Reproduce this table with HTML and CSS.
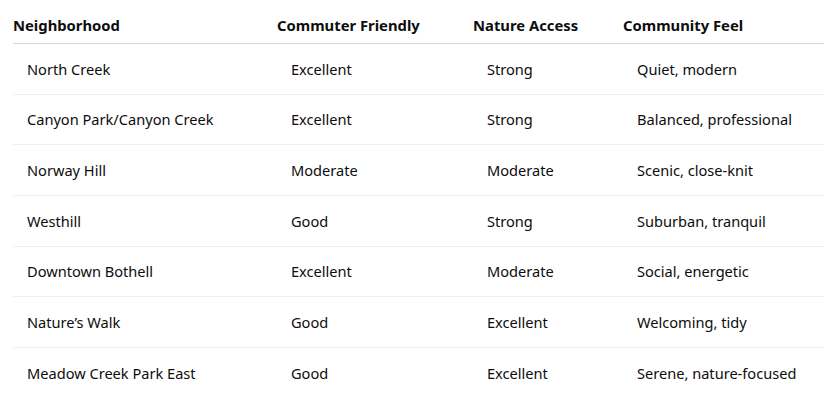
FILE: index.html
```html
<!DOCTYPE html>
<html lang="en">
<head>
<meta charset="utf-8">
<link rel="stylesheet" href="styles.css">
</head>
<body>
<div class="wrap">
<table class="grid">
  <colgroup>
    <col class="c1"><col class="c2"><col class="c3"><col class="c4">
  </colgroup>
  <thead>
    <tr><th>Neighborhood</th><th>Commuter Friendly</th><th>Nature Access</th><th>Community Feel</th></tr>
  </thead>
  <tbody>
    <tr><td>North Creek</td><td>Excellent</td><td>Strong</td><td>Quiet, modern</td></tr>
    <tr><td>Canyon Park/Canyon Creek</td><td>Excellent</td><td>Strong</td><td>Balanced, professional</td></tr>
    <tr><td>Norway Hill</td><td>Moderate</td><td>Moderate</td><td>Scenic, close-knit</td></tr>
    <tr><td>Westhill</td><td>Good</td><td>Strong</td><td>Suburban, tranquil</td></tr>
    <tr><td>Downtown Bothell</td><td>Excellent</td><td>Moderate</td><td>Social, energetic</td></tr>
    <tr><td>Nature’s Walk</td><td>Good</td><td>Excellent</td><td>Welcoming, tidy</td></tr>
    <tr><td>Meadow Creek Park East</td><td>Good</td><td>Excellent</td><td>Serene, nature-focused</td></tr>
  </tbody>
</table>
</div>
</body>
</html>
```

FILE: styles.css
```css
html, body {
  margin: 0;
  padding: 0;
  background: #ffffff;
}
body {
  font-family: "Noto Sans", "Open Sans", sans-serif;
  font-size: 15px;
  color: #0d0d0d;
}
.wrap {
  padding: 0 4px 0 13px;
}
.grid {
  width: 811px;
  border-collapse: collapse;
  table-layout: fixed;
}
.c1 { width: 264px; }
.c2 { width: 196px; }
.c3 { width: 150px; }
.c4 { width: 201px; }
.grid th {
  text-align: left;
  font-weight: 700;
  font-size: 14.8px;
  line-height: 20px;
  padding: 15px 0 8px 0;
  border-bottom: 1px solid #d9d9d9;
  white-space: nowrap;
}
.grid td {
  font-size: 14.6px;
  line-height: 20px;
  padding: 14.83px 0 14.83px 14px;
  border-bottom: 1px solid #efefef;
  white-space: nowrap;
}
.grid tbody tr:last-child td {
  border-bottom: none;
}
```
